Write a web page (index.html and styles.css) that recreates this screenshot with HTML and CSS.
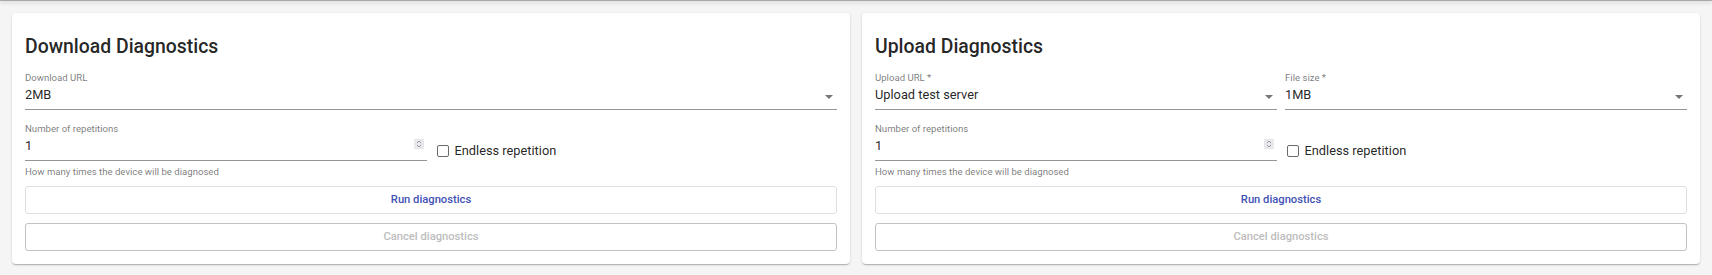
FILE: index.html
```html
<!DOCTYPE html>
<html lang="en">

<head>
    <meta charset="UTF-8">
    <title>Diagnostics</title>
    <meta name="viewport" content="width=device-width, initial-scale=1.0">
    <link rel="stylesheet" href="styles.css">
</head>

<body>
    <div class="appbar-edge"></div>

    <main class="cards">
        <!-- Download -->
        <section class="card">
            <h2 class="card-title">Download Diagnostics</h2>

            <div class="field">
                <label class="field-label">Download URL</label>
                <div class="field-input">
                    <span class="field-value">2MB</span>
                    <svg class="select-arrow" viewBox="0 0 20 20"><path d="M5 10l5 5 5-5z" /></svg>
                </div>
            </div>

            <div class="field-row">
                <div>
                    <div class="field">
                        <label class="field-label">Number of repetitions</label>
                        <div class="field-input">
                            <span class="field-value">1</span>
                            <span class="spinner">
                                <svg viewBox="0 0 10 10"><path d="M3 4l2-2 2 2M3 6l2 2 2-2" /></svg>
                            </span>
                        </div>
                    </div>
                    <div class="helper">How many times the device will be diagnosed</div>
                </div>
                <label class="check">
                    <span class="check-box"></span>
                    <span>Endless repetition</span>
                </label>
            </div>

            <button class="btn btn-run" type="button">Run diagnostics</button>
            <button class="btn btn-cancel" type="button" disabled>Cancel diagnostics</button>
        </section>

        <!-- Upload -->
        <section class="card">
            <h2 class="card-title">Upload Diagnostics</h2>

            <div class="field-row">
                <div class="field">
                    <label class="field-label">Upload URL *</label>
                    <div class="field-input">
                        <span class="field-value">Upload test server</span>
                        <svg class="select-arrow" viewBox="0 0 20 20"><path d="M5 10l5 5 5-5z" /></svg>
                    </div>
                </div>
                <div class="field">
                    <label class="field-label">File size *</label>
                    <div class="field-input">
                        <span class="field-value">1MB</span>
                        <svg class="select-arrow" viewBox="0 0 20 20"><path d="M5 10l5 5 5-5z" /></svg>
                    </div>
                </div>
            </div>

            <div class="field-row">
                <div>
                    <div class="field">
                        <label class="field-label">Number of repetitions</label>
                        <div class="field-input">
                            <span class="field-value">1</span>
                            <span class="spinner">
                                <svg viewBox="0 0 10 10"><path d="M3 4l2-2 2 2M3 6l2 2 2-2" /></svg>
                            </span>
                        </div>
                    </div>
                    <div class="helper">How many times the device will be diagnosed</div>
                </div>
                <label class="check">
                    <span class="check-box"></span>
                    <span>Endless repetition</span>
                </label>
            </div>

            <button class="btn btn-run" type="button">Run diagnostics</button>
            <button class="btn btn-cancel" type="button" disabled>Cancel diagnostics</button>
        </section>
    </main>
</body>

</html>
```

FILE: styles.css
```css
* {
    margin: 0;
    padding: 0;
    box-sizing: border-box;
}

body {
    background: #f5f5f5;
    font-family: Roboto, "Liberation Sans", sans-serif;
    color: rgba(0, 0, 0, 0.87);
}

.appbar-edge {
    height: 1px;
    background: #a8a8a8;
    box-shadow: 0 1px 4px rgba(0, 0, 0, 0.35);
}

.cards {
    display: grid;
    grid-template-columns: 1fr 1fr;
    gap: 12px;
    padding: 12px;
}

.card {
    background: white;
    border-radius: 4px;
    padding: 21px 13px 13.5px;
    box-shadow: 0 2px 1px -1px rgba(0, 0, 0, 0.12), 0 1px 1px 0 rgba(0, 0, 0, 0.1), 0 1px 3px 0 rgba(0, 0, 0, 0.12);
    display: flex;
    flex-direction: column;
}

.card-title {
    font-size: 19.4px;
    font-weight: 500;
    line-height: 25.6px;
    margin-bottom: 12px;
}

.field {
    display: flex;
    flex-direction: column;
}

.field-label {
    font-size: 9.6px;
    line-height: 12px;
    color: rgba(0, 0, 0, 0.54);
}

.field-input {
    display: flex;
    align-items: flex-start;
    padding: 3px 0 6px;
    border-bottom: 1px solid rgba(0, 0, 0, 0.42);
    font-size: 12.8px;
    line-height: 16px;
}

.field-value {
    flex: 1;
}

.select-arrow {
    width: 16px;
    height: 16px;
    fill: rgba(0, 0, 0, 0.54);
}

.spinner {
    width: 10px;
    height: 10px;
    margin: 0.5px 3px 0 0;
    background: #e9e9ed;
    display: flex;
}

.spinner svg {
    width: 10px;
    height: 10px;
    fill: none;
    stroke: #8f8f8f;
    stroke-width: 0.9;
}

.field-row {
    display: grid;
    grid-template-columns: 1fr 1fr;
    gap: 8px;
    margin-top: 13.5px;
}

.card-title + .field-row {
    margin-top: 0;
}

.helper {
    margin-top: 4.5px;
    font-size: 9.6px;
    line-height: 12px;
    color: rgba(0, 0, 0, 0.54);
}

.check {
    display: flex;
    align-items: center;
    gap: 6px;
    align-self: start;
    padding: 19.5px 0 0 1.5px;
    font-size: 12.8px;
    line-height: 16px;
}

.check-box {
    width: 12px;
    height: 12px;
    border: 1px solid #6b6b6b;
    border-radius: 2px;
}

.btn {
    height: 28px;
    border-radius: 3px;
    background: white;
    font-family: inherit;
    font-size: 11.2px;
    font-weight: 500;
}

.btn-run {
    margin-top: 8px;
    border: 1px solid #e0e0e0;
    color: #3f51b5;
}

.btn-cancel {
    margin-top: 9px;
    border: 1px solid #c2c2c2;
    color: #bdbdbd;
}
```
